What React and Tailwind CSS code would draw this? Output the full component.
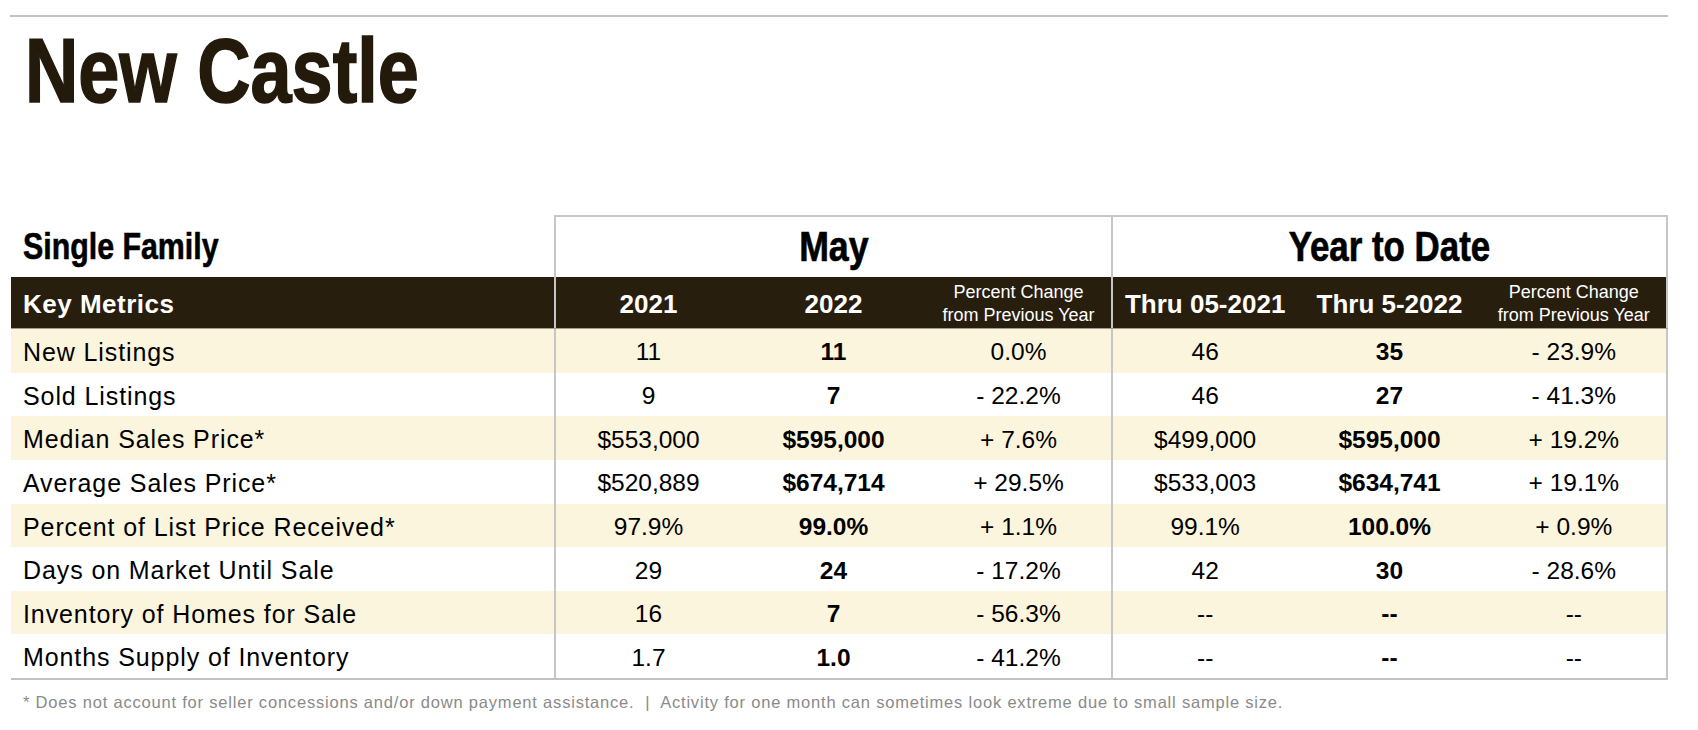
import React from "react";

const rows = [
  ["New Listings", "11", "11", "0.0%", "46", "35", "- 23.9%"],
  ["Sold Listings", "9", "7", "- 22.2%", "46", "27", "- 41.3%"],
  ["Median Sales Price*", "$553,000", "$595,000", "+ 7.6%", "$499,000", "$595,000", "+ 19.2%"],
  ["Average Sales Price*", "$520,889", "$674,714", "+ 29.5%", "$533,003", "$634,741", "+ 19.1%"],
  ["Percent of List Price Received*", "97.9%", "99.0%", "+ 1.1%", "99.1%", "100.0%", "+ 0.9%"],
  ["Days on Market Until Sale", "29", "24", "- 17.2%", "42", "30", "- 28.6%"],
  ["Inventory of Homes for Sale", "16", "7", "- 56.3%", "--", "--", "--"],
  ["Months Supply of Inventory", "1.7", "1.0", "- 41.2%", "--", "--", "--"],
];

function Cell({ children, bold }) {
  return (
    <div className={`flex flex-1 items-center justify-center pt-[4px] text-[24.5px] ${bold ? "font-bold" : ""}`}>
      {children}
    </div>
  );
}

function HeadCell({ children }) {
  return <div className="flex flex-1 items-center justify-center pt-[4px] text-[26px] font-bold">{children}</div>;
}

function PctHead() {
  return (
    <div className="flex flex-1 flex-col items-center justify-center pt-[2px] text-[18px] leading-[23px] font-normal">
      <span>Percent Change</span>
      <span>from Previous Year</span>
    </div>
  );
}

export default function App() {
  return (
    <div className="min-h-[730px] bg-white px-[10px] pt-[15px] text-black" style={{ fontFamily: '"Liberation Sans", Arial, sans-serif' }}>
      <div className="h-[2px] w-[1658px] bg-[#c2c2c2]" />
      <h1 className="mt-[9px] ml-[15px] h-[90px] text-[90px] leading-[90px] font-bold text-[#231a0b]">
        <span className="inline-block origin-left scale-x-[0.82] [-webkit-text-stroke:1.6px_#231a0b]">New Castle</span>
      </h1>

      <div className="mt-[99px] ml-[1px] w-[1657px]">
        {/* group titles */}
        <div className="flex h-[62px]">
          <div className="flex w-[543px] items-end pb-[12px] pl-[12px] text-[37px] leading-[37px] font-bold">
            <span className="inline-block origin-left scale-x-[0.82] [-webkit-text-stroke:0.6px_#000]">Single Family</span>
          </div>
          <div className="flex flex-1 items-center justify-center border-t-2 border-l-2 border-[#c6c6c6] text-[42px] leading-[42px] font-bold">
            <span className="inline-block scale-x-[0.85] [-webkit-text-stroke:0.7px_#000]">May</span>
          </div>
          <div className="flex w-[557px] items-center justify-center border-t-2 border-r-2 border-l-2 border-[#c6c6c6] text-[42px] leading-[42px] font-bold">
            <span className="inline-block scale-x-[0.83] [-webkit-text-stroke:0.7px_#000]">Year to Date</span>
          </div>
        </div>

        {/* dark header */}
        <div className="flex h-[52px] border-b border-[#a39c90] bg-[#281e0e] text-white">
          <div className="flex w-[543px] items-center pt-[4px] pl-[12px] text-[26px] tracking-[0.5px] font-bold">Key Metrics</div>
          <div className="flex flex-1 border-l-2 border-[#c6c6c6]">
            <HeadCell>2021</HeadCell>
            <HeadCell>2022</HeadCell>
            <PctHead />
          </div>
          <div className="flex w-[557px] border-r-2 border-l-2 border-[#c6c6c6]">
            <HeadCell>Thru 05-2021</HeadCell>
            <HeadCell>Thru 5-2022</HeadCell>
            <PctHead />
          </div>
        </div>

        {/* rows */}
        <div className="border-b-2 border-[#c2c2c2]">
          {rows.map((r, i) => (
            <div key={r[0]} className={`flex h-[43.625px] ${i % 2 === 0 ? "bg-[#fcf5dd]" : "bg-white"}`}>
              <div className="flex w-[543px] items-center pt-[4px] pl-[12px] text-[25px] tracking-[0.9px]">{r[0]}</div>
              <div className="flex flex-1 border-l-2 border-[#c6c6c6]">
                <Cell>{r[1]}</Cell>
                <Cell bold>{r[2]}</Cell>
                <Cell>{r[3]}</Cell>
              </div>
              <div className="flex w-[557px] border-r-2 border-l-2 border-[#c6c6c6]">
                <Cell>{r[4]}</Cell>
                <Cell bold>{r[5]}</Cell>
                <Cell>{r[6]}</Cell>
              </div>
            </div>
          ))}
        </div>

        <p className="mt-[10px] pl-[12px] text-[16.5px] tracking-[0.8px] text-[#8a8a8a]">
          * Does not account for seller concessions and/or down payment assistance.&nbsp; |&nbsp; Activity for one month can sometimes look extreme due to small sample size.
        </p>
      </div>
    </div>
  );
}
